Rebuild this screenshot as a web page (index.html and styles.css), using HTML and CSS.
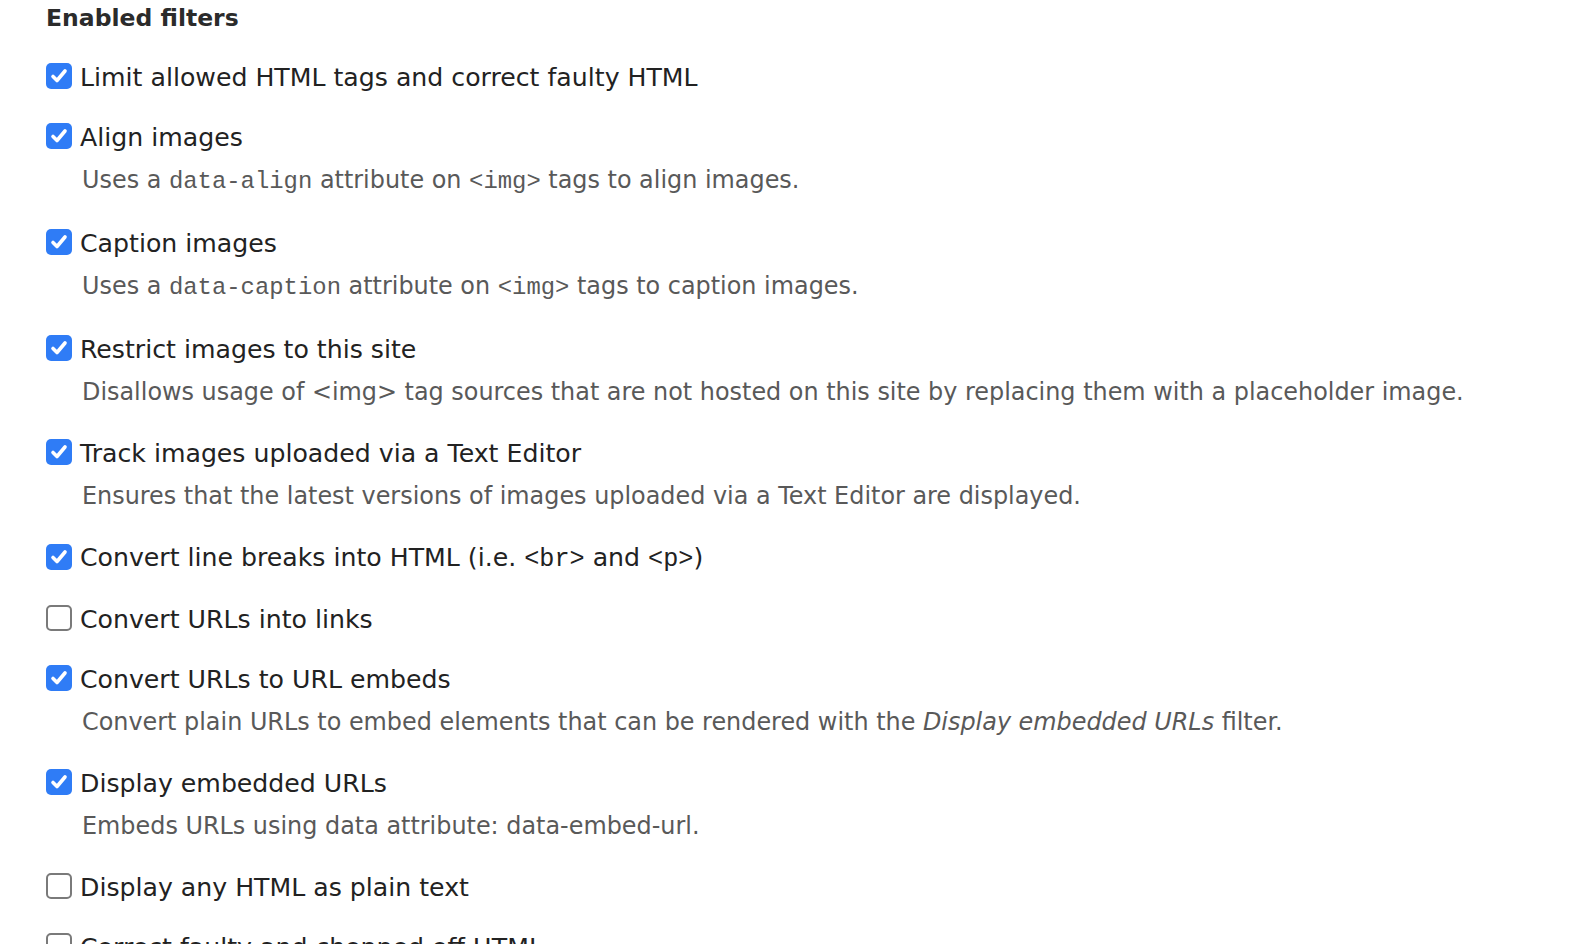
FILE: index.html
```html
<!DOCTYPE html>
<html lang="en">

<head>
  <meta charset="UTF-8" />
  <title>Enabled filters</title>
  <link rel="stylesheet" href="styles.css">
</head>

<body>
  <div class="filters">
    <h2 class="filters-title">Enabled filters</h2>

    <div class="filter">
      <label class="filter-label"><span class="box is-checked"><svg viewBox="0 0 26 26"><path d="M7 13.5l4 4 8-9.5" /></svg></span><span>Limit allowed HTML tags and correct faulty HTML</span></label>
    </div>

    <div class="filter">
      <label class="filter-label"><span class="box is-checked"><svg viewBox="0 0 26 26"><path d="M7 13.5l4 4 8-9.5" /></svg></span><span>Align images</span></label>
      <div class="filter-desc">Uses a <code>data-align</code> attribute on <code>&lt;img&gt;</code> tags to align images.</div>
    </div>

    <div class="filter">
      <label class="filter-label"><span class="box is-checked"><svg viewBox="0 0 26 26"><path d="M7 13.5l4 4 8-9.5" /></svg></span><span>Caption images</span></label>
      <div class="filter-desc">Uses a <code>data-caption</code> attribute on <code>&lt;img&gt;</code> tags to caption images.</div>
    </div>

    <div class="filter">
      <label class="filter-label"><span class="box is-checked"><svg viewBox="0 0 26 26"><path d="M7 13.5l4 4 8-9.5" /></svg></span><span>Restrict images to this site</span></label>
      <div class="filter-desc">Disallows usage of &lt;img&gt; tag sources that are not hosted on this site by replacing them with a placeholder image.</div>
    </div>

    <div class="filter">
      <label class="filter-label"><span class="box is-checked"><svg viewBox="0 0 26 26"><path d="M7 13.5l4 4 8-9.5" /></svg></span><span>Track images uploaded via a Text Editor</span></label>
      <div class="filter-desc">Ensures that the latest versions of images uploaded via a Text Editor are displayed.</div>
    </div>

    <div class="filter">
      <label class="filter-label"><span class="box is-checked"><svg viewBox="0 0 26 26"><path d="M7 13.5l4 4 8-9.5" /></svg></span><span>Convert line breaks into HTML (i.e. <code>&lt;br&gt;</code> and <code>&lt;p&gt;</code>)</span></label>
    </div>

    <div class="filter">
      <label class="filter-label"><span class="box"></span><span>Convert URLs into links</span></label>
    </div>

    <div class="filter">
      <label class="filter-label"><span class="box is-checked"><svg viewBox="0 0 26 26"><path d="M7 13.5l4 4 8-9.5" /></svg></span><span>Convert URLs to URL embeds</span></label>
      <div class="filter-desc">Convert plain URLs to embed elements that can be rendered with the <em>Display embedded URLs</em> filter.</div>
    </div>

    <div class="filter">
      <label class="filter-label"><span class="box is-checked"><svg viewBox="0 0 26 26"><path d="M7 13.5l4 4 8-9.5" /></svg></span><span>Display embedded URLs</span></label>
      <div class="filter-desc">Embeds URLs using data attribute: data-embed-url.</div>
    </div>

    <div class="filter">
      <label class="filter-label"><span class="box"></span><span>Display any HTML as plain text</span></label>
    </div>

    <div class="filter">
      <label class="filter-label"><span class="box"></span><span>Correct faulty and chopped off HTML</span></label>
    </div>
  </div>
</body>

</html>
```

FILE: styles.css
```css
/* Filter settings list */

html,
body {
  margin: 0;
  padding: 0;
  background: #ffffff;
  overflow: hidden;
}

body {
  font-family: 'DejaVu Sans', Verdana, sans-serif;
  color: #222222;
}

.filters {
  padding: 0 0 0 46px;
}

.filters-title {
  margin: 0 0 24px;
  font-size: 23.5px;
  line-height: 36px;
  font-weight: bold;
  color: #2b2b2b;
}

.filter {
  margin-bottom: 24px;
}

.filter-label {
  display: flex;
  align-items: center;
  gap: 8px;
  font-size: 25.2px;
  line-height: 36px;
  white-space: nowrap;
}

.box {
  flex: none;
  box-sizing: border-box;
  width: 26px;
  height: 26px;
  border: 2px solid #7a7a7a;
  border-radius: 5px;
  background: #ffffff;
  margin-top: -4px;
}

.box.is-checked {
  border: none;
  background: #2f7cf6;
}

.box svg {
  display: block;
  width: 26px;
  height: 26px;
}

.box path {
  fill: none;
  stroke: #ffffff;
  stroke-width: 3.6;
  stroke-linecap: round;
  stroke-linejoin: round;
}

.filter-desc {
  margin-top: 4px;
  padding-left: 36px;
  font-size: 23.9px;
  line-height: 40px;
  color: #595959;
  white-space: nowrap;
}

code {
  font-family: 'Liberation Mono', monospace;
  font-size: 1em;
}
```
